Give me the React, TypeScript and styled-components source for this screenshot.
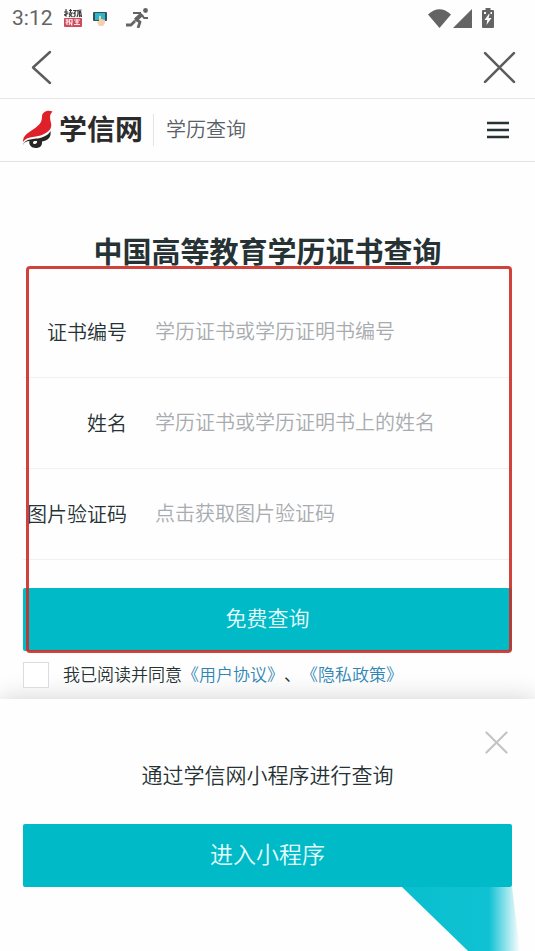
import React from 'react';
import styled, { createGlobalStyle } from 'styled-components';

const teal = '#00bac8';

const GlobalStyle = createGlobalStyle`
  *, *::before, *::after { box-sizing: border-box; }
  body {
    margin: 0;
    background: #fefefe;
    color: #263234;
    font-family: Roboto, "Noto Sans CJK SC", sans-serif;
    font-size: 20px;
    font-weight: 350;
    text-spacing-trim: space-all;
  }
  button, input { font: inherit; color: inherit; }
`;

const Screen = styled.div`
  display: flex;
  flex-direction: column;
  min-height: 100vh;
  overflow: hidden;
`;

const StatusBar = styled.div`
  display: flex;
  align-items: center;
  justify-content: space-between;
  height: 36px;
  padding: 0 41px 0 12px;
  color: #646464;
`;

const StatusGroup = styled.div<{ $gap: number }>`
  display: flex;
  align-items: center;
  gap: ${({ $gap }) => $gap}px;
`;

const Clock = styled.time`
  font-size: 21px;
  font-weight: 400;
  line-height: 36px;
`;

const BrowserBar = styled.nav`
  display: flex;
  align-items: center;
  justify-content: space-between;
  height: 63px;
  padding: 0 19px 0 28px;
  border-bottom: 1px solid #e6e6e6;
`;

const IconButton = styled.button<{ $color: string }>`
  display: flex;
  padding: 0;
  border: 0;
  background: none;
  color: ${({ $color }) => $color};
  cursor: pointer;
`;

const SiteHeader = styled.header`
  display: flex;
  align-items: center;
  height: 63px;
  padding: 0 25px 0 22px;
  border-bottom: 1px solid #e4e4e4;
`;

const Brand = styled.a`
  display: flex;
  align-items: center;
  gap: 5px;
  color: #2b2b2b;
  font-size: 28px;
  font-weight: 700;
  line-height: 40px;
  text-decoration: none;
`;

const BrandName = styled.span`
  padding-top: 2px;
`;

const Section = styled.span`
  flex: 1;
  margin-left: 10px;
  padding-left: 12px;
  border-left: 1px solid #e4e4e4;
  color: #596068;
  line-height: 32px;
`;

const Main = styled.main`
  flex: 1;
  padding: 69px 23px 10px;
`;

const Title = styled.h1`
  margin: 0;
  font-size: 29px;
  font-weight: 700;
  line-height: 44px;
  text-align: center;
  white-space: nowrap;
`;

const Form = styled.form`
  position: relative;
  padding-top: 12px;
`;

const Highlight = styled.div`
  position: absolute;
  inset: -9px 0 35px 3px;
  border: 3px solid rgba(205, 45, 40, 0.9);
  border-radius: 4px;
  pointer-events: none;
`;

const Field = styled.div`
  display: grid;
  grid-template-columns: 104px 1fr;
  align-items: center;
  column-gap: 28px;
  height: 91px;
  border-bottom: 1px solid #f1f1f1;
`;

const Label = styled.label`
  display: flex;
  justify-content: flex-end;
  padding-bottom: 2px;
  white-space: nowrap;
`;

const TextInput = styled.input`
  width: 100%;
  height: 60px;
  padding: 0;
  border: 0;
  outline: 0;
  background: none;
  &::placeholder { color: #a8abaf; opacity: 1; }
`;

const PrimaryButton = styled.button<{ $size: number }>`
  display: block;
  width: 100%;
  height: 63px;
  padding: 0 0 6px;
  border: 0;
  border-radius: 2px;
  background: ${teal};
  color: #e8ffff;
  font-size: ${({ $size }) => $size}px;
  cursor: pointer;
`;

const Submit = styled.div`
  padding-top: 28px;
`;

const Agreement = styled.div`
  display: flex;
  align-items: center;
  gap: 14px;
  height: 26px;
  margin-top: 11px;
  font-size: 17px;
  line-height: 26px;
  white-space: nowrap;
`;

const Checkbox = styled.input`
  appearance: none;
  width: 26px;
  height: 26px;
  margin: 0;
  border: 1px solid #dcdcdc;
  background: #fff;
  &:checked { background: ${teal}; }
`;

const PolicyLink = styled.a`
  color: #2f86b5;
  text-decoration: none;
`;

const Sheet = styled.aside`
  padding: 32px 23px 0;
  background: #fefefe;
  box-shadow: 0 0 24px rgba(0, 0, 0, 0.18);
`;

const SheetTop = styled.div`
  display: flex;
  justify-content: flex-end;
  padding-right: 4px;
`;

const SheetTitle = styled.h2`
  margin: 6px 0 32px;
  font-size: 21px;
  font-weight: 350;
  line-height: 32px;
  text-align: center;
`;

const SheetFooter = styled.div`
  display: flex;
  justify-content: flex-end;
  height: 64px;
  margin-right: -12px;
`;

const WifiIcon = () => (
  <svg width="23" height="19" viewBox="0 0 23 19" fill="currentColor" aria-hidden="true">
    <path d="M0 5.5Q11.500-5 23 5.500L11.500 19Z" />
  </svg>
);

const SignalIcon = () => (
  <svg width="19" height="19" viewBox="0 0 19 19" fill="currentColor" aria-hidden="true">
    <path d="M19 0V19H0Z" />
  </svg>
);

const BatteryIcon = () => (
  <svg width="12" height="20" viewBox="0 0 12 20" aria-hidden="true">
    <path fill="currentColor" d="M3.500 0h5v2H11q1 0 1 1v16q0 1-1 1H1q-1 0-1-1V3q0-1 1-1h2.500Z" />
    <path fill="#fefefe" d="M6.800 6 2.500 12h2.800l-.8 5 5-7H6.600l1-4ZM2 4h2v2H2zM8.500 4h1.500v2H8.500z" />
  </svg>
);

const VideoAppIcon = () => (
  <svg width="18" height="18" viewBox="0 0 18 18" fill="none" aria-hidden="true">
    <path stroke="#3c3c3c" strokeWidth="1.200" d="M0 3h4M2 0v7L.5 6M0 6l4-1.500M5 1.500h3M6.500 0v4M4.500 4H8L5 8M5 5l3.500 3M9 1.500h3L9.500 5M11 3v4L9.500 8M13 1.500 17.500 1M14 1v4l-1 3M15.500 2v5.500l1.500-1M16.500 2l1 6" />
    <rect y="9" width="18" height="9" rx="1" fill="#cc4b5d" />
    <path stroke="#ffe2e5" strokeWidth="1.200" d="M1.500 11h3M3 10v6M1.500 14 5 12.500M5.500 10.500H8V14H5.500zM6 14l-1 2M7.500 14v2h1M10 11h6M11 13h4M10 15.500h6M13 10v5" />
  </svg>
);

const TouchAppIcon = () => (
  <svg width="14" height="15" viewBox="0 0 14 15" aria-hidden="true">
    <rect y="1" width="14" height="9" rx="1" fill="#34525c" />
    <rect x="2" y="2" width="10" height="7" fill="#2cb6c6" />
    <path d="M6 5q1-1 2 0v3l4 1v3l-2 3H6l-2-4 2-1Z" fill="#f8cfae" />
  </svg>
);

const RunnerIcon = () => (
  <svg width="23" height="20" viewBox="0 0 23 20" fill="none" stroke="currentColor" strokeLinejoin="round" aria-hidden="true">
    <circle cx="19.500" cy="2.500" r="2.400" fill="currentColor" stroke="none" />
    <path strokeWidth="2" d="M7 5h8M16 7l2 3h4" />
    <path strokeWidth="4.200" d="M16 6 9.500 12" />
    <path strokeWidth="2.800" d="m9 11 5 3-2 6M9 13l-4 4H0" />
  </svg>
);

const BackIcon = () => (
  <svg width="24" height="36" viewBox="0 0 24 36" fill="none" stroke="currentColor" strokeWidth="2.400" strokeLinecap="round" strokeLinejoin="round" aria-hidden="true">
    <path d="M22 3 5 18.500 22 34" />
  </svg>
);

const CrossIcon = ({ size, weight }: { size: number; weight: number }) => (
  <svg width={size} height={size} viewBox="0 0 32 32" fill="none" stroke="currentColor" strokeWidth={weight} strokeLinecap="round" aria-hidden="true">
    <path d="m2 2 28 28M30 2 2 30" />
  </svg>
);

const MenuIcon = () => (
  <svg width="24" height="20" viewBox="0 0 24 20" stroke="currentColor" strokeWidth="2.600" aria-hidden="true">
    <path d="M1 3h22M1 10h22M1 17h22" />
  </svg>
);

const LogoIcon = () => (
  <svg width="32" height="40" viewBox="0 0 32 40" aria-hidden="true">
    <path fill="#df202b" d="M30.500 1.500C25-.5 20 2 20 7c0 6-4 9-9 12.500C6 23 1 25 1 32c5-7 14-4 21-8 6-3 8-6 7-11-1-4-2-8 1.500-11.500Z" />
    <path fill="#292525" d="M1 35c3-8 13-5 20-8 4-2 6-3 7.500-6 1 5-2 10-8.500 10.500C20.500 36 17.500 38 14 38c-5 0-7.500-3.500-6.500-7-3 0-5 1-6.500 4Z" />
    <path fill="#fff" d="M12.500 31c-2 .5-2 3 0 3s3-1.500 2.500-3Z" />
  </svg>
);

const RibbonCorner = () => (
  <svg width="132" height="64" viewBox="0 0 132 64" aria-hidden="true">
    <defs>
      <linearGradient id="ribbon" x1="0" x2="1" y1="0" y2="0">
        <stop offset="0" stopColor="#08bfce" />
        <stop offset=".74" stopColor="#10c2d3" />
        <stop offset="1" stopColor="#10c2d3" stopOpacity="0" />
      </linearGradient>
    </defs>
    <path fill="url(#ribbon)" d="M10 0h110l8 64H76Z" />
  </svg>
);

const fields = [
  { id: 'certificate', label: '证书编号', hint: '学历证书或学历证明书编号' },
  { id: 'name', label: '姓名', hint: '学历证书或学历证明书上的姓名' },
  { id: 'captcha', label: '图片验证码', hint: '点击获取图片验证码' },
];

export default function App() {
  return (
    <Screen lang="zh-CN">
      <GlobalStyle />
      <StatusBar>
        <StatusGroup $gap={11}>
          <Clock>3:12</Clock>
          <VideoAppIcon />
          <StatusGroup $gap={19}>
            <TouchAppIcon />
            <RunnerIcon />
          </StatusGroup>
        </StatusGroup>
        <StatusGroup $gap={10}>
          <StatusGroup $gap={2}>
            <WifiIcon />
            <SignalIcon />
          </StatusGroup>
          <BatteryIcon />
        </StatusGroup>
      </StatusBar>
      <BrowserBar>
        <IconButton $color="#5c5c5c" type="button" aria-label="返回"><BackIcon /></IconButton>
        <IconButton $color="#5c5c5c" type="button" aria-label="关闭"><CrossIcon size={33} weight={2.5} /></IconButton>
      </BrowserBar>
      <SiteHeader>
        <Brand href="#home"><LogoIcon /><BrandName>学信网</BrandName></Brand>
        <Section>学历查询</Section>
        <IconButton $color="#263234" type="button" aria-label="菜单"><MenuIcon /></IconButton>
      </SiteHeader>
      <Main>
        <Title>中国高等教育学历证书查询</Title>
        <Form onSubmit={(event) => event.preventDefault()}>
          {fields.map(({ id, label, hint }) => (
            <Field key={id}>
              <Label htmlFor={id}>{label}</Label>
              <TextInput id={id} placeholder={hint} />
            </Field>
          ))}
          <Submit><PrimaryButton $size={21} type="submit">免费查询</PrimaryButton></Submit>
          <Agreement>
            <Checkbox id="agree" type="checkbox" />
            <span>
              <label htmlFor="agree">我已阅读并同意</label>
              <PolicyLink href="#terms">《用户协议》</PolicyLink>、
              <PolicyLink href="#privacy">《隐私政策》</PolicyLink>
            </span>
          </Agreement>
          <Highlight />
        </Form>
      </Main>
      <Sheet>
        <SheetTop>
          <IconButton $color="#c4c4c4" type="button" aria-label="关闭提示"><CrossIcon size={23} weight={3} /></IconButton>
        </SheetTop>
        <SheetTitle>通过学信网小程序进行查询</SheetTitle>
        <PrimaryButton $size={23} type="button">进入小程序</PrimaryButton>
        <SheetFooter><RibbonCorner /></SheetFooter>
      </Sheet>
    </Screen>
  );
}
